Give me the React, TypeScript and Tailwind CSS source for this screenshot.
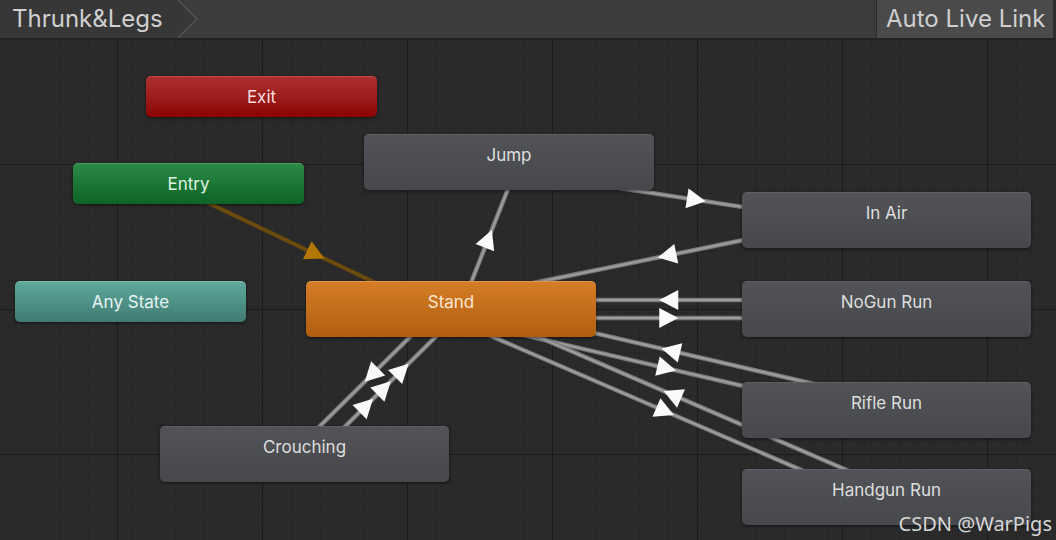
import React from 'react';

type Pt = [number, number];

// node centers in page coordinates, used for transition lines
const C: Record<string, Pt> = {
  stand: [451, 309],
  jump: [509, 162],
  inAir: [886.5, 220],
  noGun: [886.5, 309],
  rifle: [886.5, 410],
  handgun: [886.5, 497],
  crouch: [304.5, 454],
  entry: [188.5, 183.5],
};

const edges: { from: string; to: string; count?: number; entry?: boolean }[] = [
  { from: 'entry', to: 'stand', entry: true },
  { from: 'stand', to: 'jump' },
  { from: 'jump', to: 'inAir' },
  { from: 'inAir', to: 'stand' },
  { from: 'noGun', to: 'stand' },
  { from: 'stand', to: 'noGun' },
  { from: 'rifle', to: 'stand' },
  { from: 'stand', to: 'rifle' },
  { from: 'handgun', to: 'stand' },
  { from: 'stand', to: 'handgun' },
  { from: 'stand', to: 'crouch' },
  { from: 'crouch', to: 'stand', count: 3 },
];

const nodes = [
  { label: 'Exit', cls: 'left-[146px] top-[36px] w-[231px] h-[41px] bg-linear-to-b from-[#ad2e2e] to-[#8b0202] border-[#c24a4a] text-[#f4dede]' },
  { label: 'Entry', cls: 'left-[73px] top-[123px] w-[231px] h-[41px] bg-linear-to-b from-[#2b8a45] to-[#0b6427] border-[#4aa062] text-[#def3e2]' },
  { label: 'Any State', cls: 'left-[15px] top-[241px] w-[231px] h-[41px] bg-linear-to-b from-[#5fa89b] to-[#3f7b73] border-[#7ab9ad] text-[#e6f3f1]' },
  { label: 'Stand', cls: 'left-[306px] top-[241px] w-[290px] h-[56px] bg-linear-to-b from-[#d57d26] to-[#b05e0e] border-[#e0954a] text-[#fbe6d2]' },
  { label: 'Jump', cls: 'left-[364px] top-[94px] w-[290px] h-[56px] bg-linear-to-b from-[#515358] to-[#46484c] border-[#5e6065] text-[#dedede]' },
  { label: 'In Air', cls: 'left-[742px] top-[152px] w-[289px] h-[56px] bg-linear-to-b from-[#515358] to-[#46484c] border-[#5e6065] text-[#dedede]' },
  { label: 'NoGun Run', cls: 'left-[742px] top-[241px] w-[289px] h-[56px] bg-linear-to-b from-[#515358] to-[#46484c] border-[#5e6065] text-[#dedede]' },
  { label: 'Rifle Run', cls: 'left-[742px] top-[342px] w-[289px] h-[56px] bg-linear-to-b from-[#515358] to-[#46484c] border-[#5e6065] text-[#dedede]' },
  { label: 'Handgun Run', cls: 'left-[742px] top-[429px] w-[289px] h-[56px] bg-linear-to-b from-[#515358] to-[#46484c] border-[#5e6065] text-[#dedede]' },
  { label: 'Crouching', cls: 'left-[160px] top-[386px] w-[289px] h-[56px] bg-linear-to-b from-[#515358] to-[#46484c] border-[#5e6065] text-[#dedede]' },
];

const OFF = 9;

function tri(c: Pt, d: Pt, p: Pt) {
  const L = 9.5, W = 10;
  const a = [c[0] + d[0] * L, c[1] + d[1] * L];
  const b1 = [c[0] - d[0] * L + p[0] * W, c[1] - d[1] * L + p[1] * W];
  const b2 = [c[0] - d[0] * L - p[0] * W, c[1] - d[1] * L - p[1] * W];
  return `${a[0]},${a[1]} ${b1[0]},${b1[1]} ${b2[0]},${b2[1]}`;
}

const Transitions: React.FC = () => (
  <>
    {edges.map((e, i) => {
      const a = C[e.from], b = C[e.to];
      const dx = b[0] - a[0], dy = b[1] - a[1];
      const len = Math.hypot(dx, dy);
      const d: Pt = [dx / len, dy / len];
      const p: Pt = [-d[1], d[0]];
      const s: Pt = [a[0] + p[0] * OFF, a[1] + p[1] * OFF];
      const t: Pt = [b[0] + p[0] * OFF, b[1] + p[1] * OFF];
      const m: Pt = [(s[0] + t[0]) / 2, (s[1] + t[1]) / 2];
      const n = e.count ?? 1;
      const centers: Pt[] = n === 1 ? [m] : [-25, 0, 25].map(k => [m[0] + d[0] * k, m[1] + d[1] * k] as Pt);
      return (
        <g key={i}>
          {e.entry ? (
            <line x1={s[0]} y1={s[1]} x2={t[0]} y2={t[1]} stroke="#6a4a0d" strokeWidth={4} />
          ) : (
            <>
              <line x1={s[0]} y1={s[1]} x2={t[0]} y2={t[1]} stroke="#7a7a7a" strokeWidth={4.5} />
              <line x1={s[0]} y1={s[1]} x2={t[0]} y2={t[1]} stroke="#9d9d9d" strokeWidth={2} />
            </>
          )}
          {centers.map((c, j) => (
            <polygon key={j} points={tri(c, d, p)} fill={e.entry ? '#b37705' : '#fafafa'} />
          ))}
        </g>
      );
    })}
  </>
);

export default function App() {
  return (
    <div className="w-[1056px] h-[540px] overflow-hidden flex flex-col bg-[#2a2a2a] font-['Inter','Noto_Sans',sans-serif]">
      {/* toolbar */}
      <div className="h-[40px] shrink-0 flex bg-[#3c3c3c] border-b-2 border-[#222222]">
        <div className="flex items-stretch">
          <div className="bg-[#373737] pl-[12px] pr-[14px] flex items-center text-[24px] text-[#d0d0d0] leading-none">Thrunk&amp;Legs</div>
          <svg width="22" height="38" viewBox="0 0 22 38" className="block">
            <polygon points="0,0 2,0 20,19 2,38 0,38" fill="#373737" />
            <polyline points="1,0 20,19 1,38" fill="none" stroke="#575757" strokeWidth="1.2" />
          </svg>
        </div>
        <div className="flex-1" />
        <div className="w-[177px] bg-[#4a4a4a] border-l border-[#2a2a2a] flex items-center pl-[9px] text-[24px] text-[#cfcfcf] leading-none">Auto Live Link</div>
        <div className="w-[3px] bg-[#2e2e2e]" />
      </div>

      {/* graph canvas */}
      <div className="relative flex-1">
        <svg className="absolute inset-0" width="1056" height="500" viewBox="0 40 1056 500">
          <defs>
            <pattern id="minor" x="1" y="4.5" width="14.5" height="14.5" patternUnits="userSpaceOnUse">
              <path d="M0 0V14.5M0 0H14.5" stroke="#222222" strokeWidth="1" fill="none" />
            </pattern>
            <pattern id="major" x="117" y="19" width="145" height="145" patternUnits="userSpaceOnUse">
              <path d="M0 0V145M0 0H145" stroke="#181818" strokeWidth="1.5" fill="none" />
            </pattern>
          </defs>
          <rect x="0" y="40" width="1056" height="500" fill="#2a2a2a" />
          <rect x="0" y="40" width="1056" height="500" fill="url(#minor)" />
          <rect x="0" y="40" width="1056" height="500" fill="url(#major)" />
          <Transitions />
        </svg>

        {nodes.map(n => (
          <div
            key={n.label}
            className={`absolute rounded-[5px] border-t shadow-[0_1px_3px_rgba(0,0,0,0.55)] text-center text-[17px] leading-[20px] pt-[10px] ${n.cls}`}
          >
            {n.label}
          </div>
        ))}

        <div className="absolute right-[4px] bottom-[6px] text-[20px] leading-none text-[#d6d6d6] font-['Noto_Sans',sans-serif]">CSDN @WarPigs</div>
      </div>
    </div>
  );
}
